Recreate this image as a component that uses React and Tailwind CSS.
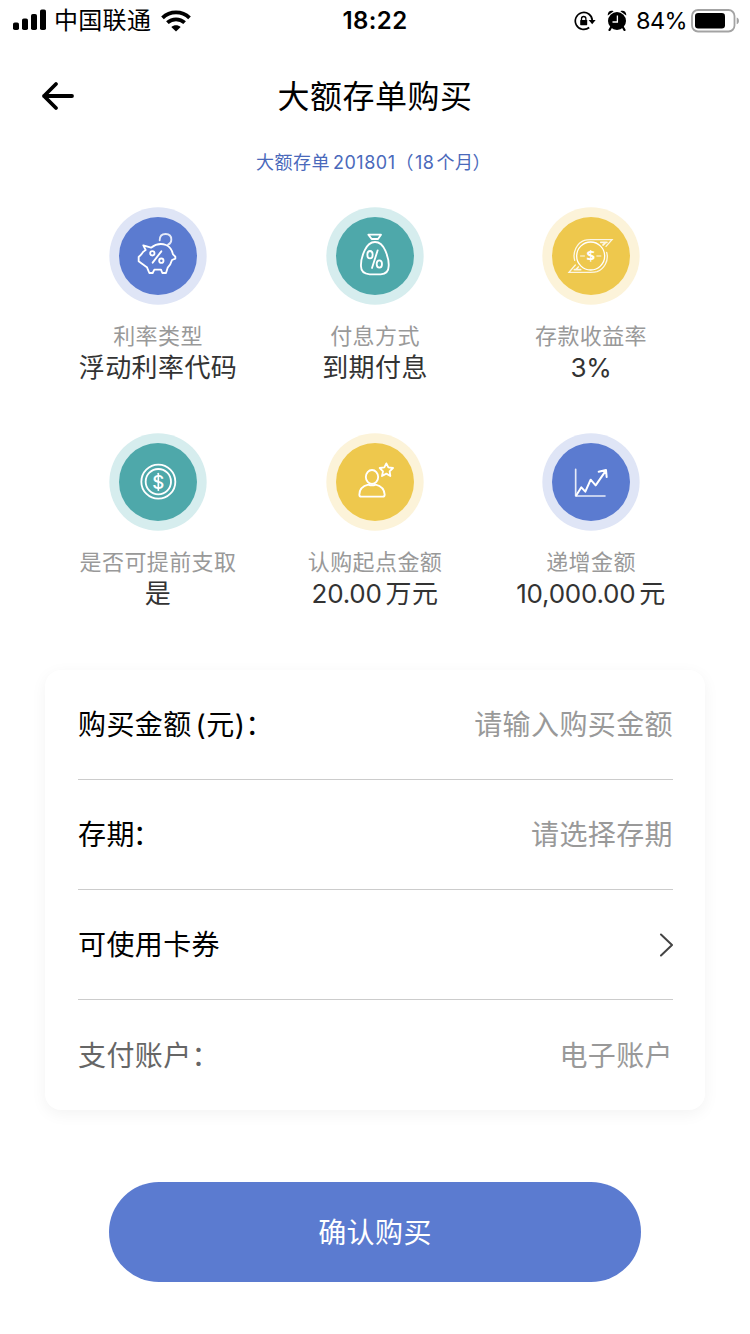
import React from "react";

function Disc({ ring, fill, children }) {
  return (
    <svg className="h-[98px] w-[98px]" viewBox="27 21 294 294" fill="none" stroke="#fff" strokeLinecap="round" strokeLinejoin="round">
      <circle cx="174" cy="168" r="146" fill={ring} stroke="none" />
      <circle cx="174" cy="168" r="117" fill={fill} stroke="none" />
      {children}
    </svg>
  );
}

const BLUE = { ring: "#dfe5f6", fill: "#5b7bd0" };
const TEAL = { ring: "#d6edee", fill: "#4ea8aa" };
const GOLD = { ring: "#fcf3d9", fill: "#eec84d" };

const PiggyIcon = () => (
  <Disc {...BLUE}>
    <g strokeWidth="5.500">
      <path d="M130 136 L153 143 C166 133 184 130 198 135 C210 140 216 149 219 163 L226 170 V176 L216 180 C213 191 208 198 203 203 L198 219 H187 L183 209 H163 L158 219 H148 L141 202 C134 197 128 193 124 190 L116 184 V171 L124 163 C127 157 131 153 137 150 Z" />
      <path d="M179 121 C179 109 186 102 197 102 C208 102 214 109 214 119 C214 127 209 132 204 134" opacity=".85" />
      <circle cx="157" cy="160" r="6.500" />
      <circle cx="184" cy="182" r="6.500" />
      <path d="M184 154 L158 188" />
    </g>
  </Disc>
);

const BagIcon = () => (
  <Disc {...TEAL}>
    <g strokeWidth="5.500">
      <path d="M154 104 H192 L183 117 H164 Z" />
      <path d="M174 126 C187 126 198 136 205 152 C211 166 216 183 215 198 C215 215 205 222 191 223 H158 C143 222 132 214 132 199 C131 182 136 166 143 151 C150 136 161 126 174 126 Z" />
      <ellipse cx="159" cy="164" rx="8" ry="11" />
      <ellipse cx="187" cy="192" rx="8" ry="11" />
      <path d="M182 151 L165 204" />
    </g>
  </Disc>
);

const YieldIcon = () => (
  <Disc {...GOLD}>
    <circle cx="173" cy="168" r="42" strokeWidth="4" />
    <g opacity=".85" strokeWidth="4" strokeLinejoin="miter">
      <path d="M125 181 C118 156 132 129 154 121 C160 119 167 119 174 119 H237 L219 139" />
      <path d="M221 157 C228 181 214 207 192 215 C186 217 180 217 172 217 H108 L127 195" />
      <path d="M203 127 H222 M210 135 L216 130 M143 209 H124 M136 201 L130 207" strokeWidth="5" />
    </g>
    <path d="M143 168 H154 M192 168 H203" strokeWidth="5" opacity=".6" />
    <text x="173" y="184" fill="#fff" stroke="none" textAnchor="middle" className="font-['Open_Sans'] text-[45px] font-bold">$</text>
  </Disc>
);

const CoinIcon = () => (
  <Disc {...TEAL}>
    <g strokeWidth="5.500">
      <circle cx="175" cy="167" r="51" />
      <circle cx="175" cy="167" r="38" />
    </g>
    <text x="175" y="188" fill="#fff" stroke="none" textAnchor="middle" className="font-['Inter'] text-[56px] font-medium">$</text>
    <path d="M175 142 V193" strokeWidth="4" />
  </Disc>
);

const PersonIcon = () => (
  <Disc {...GOLD}>
    <g strokeWidth="5.500">
      <ellipse cx="165" cy="153" rx="18.500" ry="21" />
      <path d="M154 176 C138 180 127 190 127 206 Q127 212 133 212 H197 Q203 212 203 206 C202 190 193 180 176 176 C169 179 161 179 154 176 Z" />
      <path d="M208 112 L214 124 L228 126 L218 136 L220 150 L208 143 L195 150 L198 136 L188 126 L202 124 Z" />
    </g>
  </Disc>
);

const TrendIcon = () => (
  <Disc {...BLUE}>
    <path d="M128 130 V210 H216" strokeWidth="5" opacity=".85" />
    <path d="M130 208 L145 184 L157 197 L173 161 L188 178 L217 136 M197 137 L219 132 L221 153" strokeWidth="6" />
  </Disc>
);

function SignalIcon() {
  return (
    <svg className="-mt-[2px] block h-[22px] w-[34px]" viewBox="0 0 34 22">
      <rect x="0" y="13.500" width="6" height="7.500" rx="1.800" />
      <rect x="9" y="9.500" width="6" height="11.500" rx="1.800" />
      <rect x="18" y="5" width="6" height="16" rx="1.800" />
      <rect x="27" y="0.500" width="6" height="20.500" rx="1.800" />
    </svg>
  );
}

function WifiIcon() {
  return (
    <svg className="h-[22px] w-[30px]" viewBox="0 0 30 22" fill="none" stroke="#000" strokeWidth="3.800">
      <path d="M1.500 7.800 C9 0.600 21 0.600 28.500 7.800" />
      <path d="M6.400 12.700 C11.200 8.200 18.800 8.200 23.600 12.700" />
      <path d="M15 21.500 L10.300 17 C13 14.600 17 14.600 19.700 17 Z" fill="#000" stroke="none" />
    </svg>
  );
}

function LockIcon() {
  return (
    <svg className="h-[20px] w-[22px]" viewBox="0 0 22 20" fill="none" stroke="#000" strokeWidth="1.700">
      <path d="M15.200 16.500 A8.500 8.500 0 1 1 18.300 9.500" />
      <path d="M14.600 8.900 H21.600 L18.200 13.200 Z" fill="#000" stroke="none" />
      <rect x="6.200" y="9" width="7" height="5.200" rx=".6" fill="#000" stroke="none" />
      <path d="M7.500 9.500 V7.700 A2.200 2.200 0 0 1 11.900 7.700 V9.500" strokeWidth="1.300" />
    </svg>
  );
}

function AlarmIcon() {
  return (
    <svg className="h-[21px] w-[20px]" viewBox="0 0 20 21">
      <circle cx="10" cy="11" r="9" />
      <path d="M4.500 16.500 L2.500 20 M15.500 16.500 L17.500 20" stroke="#000" strokeWidth="2.200" fill="none" strokeLinecap="round" />
      <path d="M0.800 5.500 C0.300 2 3.500 -0.300 6.600 1.300 Z M19.200 5.500 C19.700 2 16.500 -0.300 13.400 1.300 Z" />
      <path d="M10.400 5.500 V12 H5.500" stroke="#fff" strokeWidth="1.300" fill="none" />
    </svg>
  );
}

function BatteryIcon() {
  return (
    <svg className="h-[24px] w-[49px]" viewBox="0 0 49 24">
      <rect x="1" y="1" width="42.500" height="21.500" rx="6" fill="none" stroke="#a3a3a3" strokeWidth="1.800" />
      <rect x="4" y="4" width="30" height="15.500" rx="3.200" />
      <path d="M45.700 8.500 C48.700 9.500 48.700 14.300 45.700 15.300 Z" fill="#a3a3a3" />
    </svg>
  );
}

const facts = [
  { Icon: PiggyIcon, label: "利率类型", value: "浮动利率代码" },
  { Icon: BagIcon, label: "付息方式", value: "到期付息" },
  { Icon: YieldIcon, label: "存款收益率", number: "3%" },
  { Icon: CoinIcon, label: "是否可提前支取", value: "是" },
  { Icon: PersonIcon, label: "认购起点金额", number: "20.00", value: "万元" },
  { Icon: TrendIcon, label: "递增金额", number: "10,000.00", value: "元" },
];

function Fact({ Icon, label, number, value }) {
  return (
    <div className="flex h-[226px] flex-col items-center">
      <Icon />
      <div className="mt-[16px] h-[31px] text-[22px] leading-[31px] tracking-[0.4px] whitespace-nowrap text-[#999]">{label}</div>
      <div className="flex h-[32px] gap-[4px] text-[26px] leading-[32px] tracking-[0.4px] whitespace-nowrap text-[#333]">
        {number && <span className="tracking-[-0.25px]">{number}</span>}
        {value && <span>{value}</span>}
      </div>
    </div>
  );
}

function Row({ label, labelClass = "text-black", children, last }) {
  return (
    <div className={last ? "flex h-[110px] items-center justify-between pt-[2px]" : "flex h-[110px] items-center justify-between border-b border-[#ccc] pt-px"}>
      <div className={`flex ${labelClass}`}>{label}</div>
      <div className="text-[#999]">{children}</div>
    </div>
  );
}

export default function App() {
  return (
    <div className="flex h-[1334px] w-[750px] flex-col overflow-hidden bg-white font-['Inter','Noto_Sans_CJK_SC',sans-serif] text-black">
      <div className="grid h-[40px] grid-cols-3 items-center">
        <div className="flex items-center pl-[13px]">
          <SignalIcon />
          <span className="ml-[7px] pt-px text-[24px] leading-[40px] tracking-[0.3px]">中国联通</span>
          <span className="ml-[10px]"><WifiIcon /></span>
        </div>
        <div className="pt-px text-center text-[24px] leading-[40px] font-semibold tracking-[0.4px]">18:22</div>
        <div className="flex items-center justify-end pr-[10px]">
          <LockIcon />
          <span className="ml-[11px]"><AlarmIcon /></span>
          <span className="ml-[9px] pt-px text-[23.500px] leading-[40px] tracking-[-0.6px]">84%</span>
          <span className="ml-[4px]"><BatteryIcon /></span>
        </div>
      </div>

      <header className="grid h-[112px] grid-cols-[150px_1fr_150px] items-center">
        <button className="pl-[41px]" aria-label="返回">
          <svg className="h-[30px] w-[34px]" viewBox="0 0 34 30" fill="none" stroke="#000" strokeWidth="3.800" strokeLinecap="round" strokeLinejoin="round">
            <path d="M31 15 H3 M15 3 L3 15 L15 27" />
          </svg>
        </button>
        <h1 className="pt-[2px] text-center text-[32px] leading-[44px] tracking-[0.5px]">大额存单购买</h1>
      </header>

      <div className="flex h-[55px] justify-center pr-[3px] text-[18px] leading-[22px] tracking-[0.5px] text-[#4a69bb]">
        <span>大额存单</span>
        <span className="ml-[3px]">201801</span>
        <span>（</span>
        <span className="ml-px">18</span>
        <span className="ml-[2px]">个月</span>
        <span className="-ml-px">）</span>
      </div>

      <section className="grid h-[463px] grid-cols-[216px_218px_214px] content-start pl-[50px]">
        {facts.map((f) => <Fact key={f.label} {...f} />)}
      </section>

      <section className="mx-[45px] h-[440px] rounded-[16px] bg-white pr-[32px] pl-[33px] text-[28px] leading-[40px] tracking-[0.4px] shadow-[0_4px_16px_rgba(0,0,0,0.05)]">
        <Row label={<><span>购买金额</span><span className="ml-[4px]">(</span><span>元</span><span>)</span><span>：</span></>}>请输入购买金额</Row>
        <Row label={<><span>存期</span><span className="-ml-[2px]">：</span></>}>请选择存期</Row>
        <Row label="可使用卡券">
          <svg className="h-[24px] w-[14px]" viewBox="0 0 14 24" fill="none" stroke="#444" strokeWidth="2" strokeLinecap="round" strokeLinejoin="round">
            <path d="M2 1.500 L13 12 L2 22.500" />
          </svg>
        </Row>
        <Row label="支付账户：" labelClass="text-[#666]" last>电子账户</Row>
      </section>

      <button className="mx-auto mt-[72px] h-[100px] w-[532px] rounded-full bg-[#5b7bd0] pt-[2px] text-[28px] leading-[40px] tracking-[0.4px] text-white">确认购买</button>
    </div>
  );
}
